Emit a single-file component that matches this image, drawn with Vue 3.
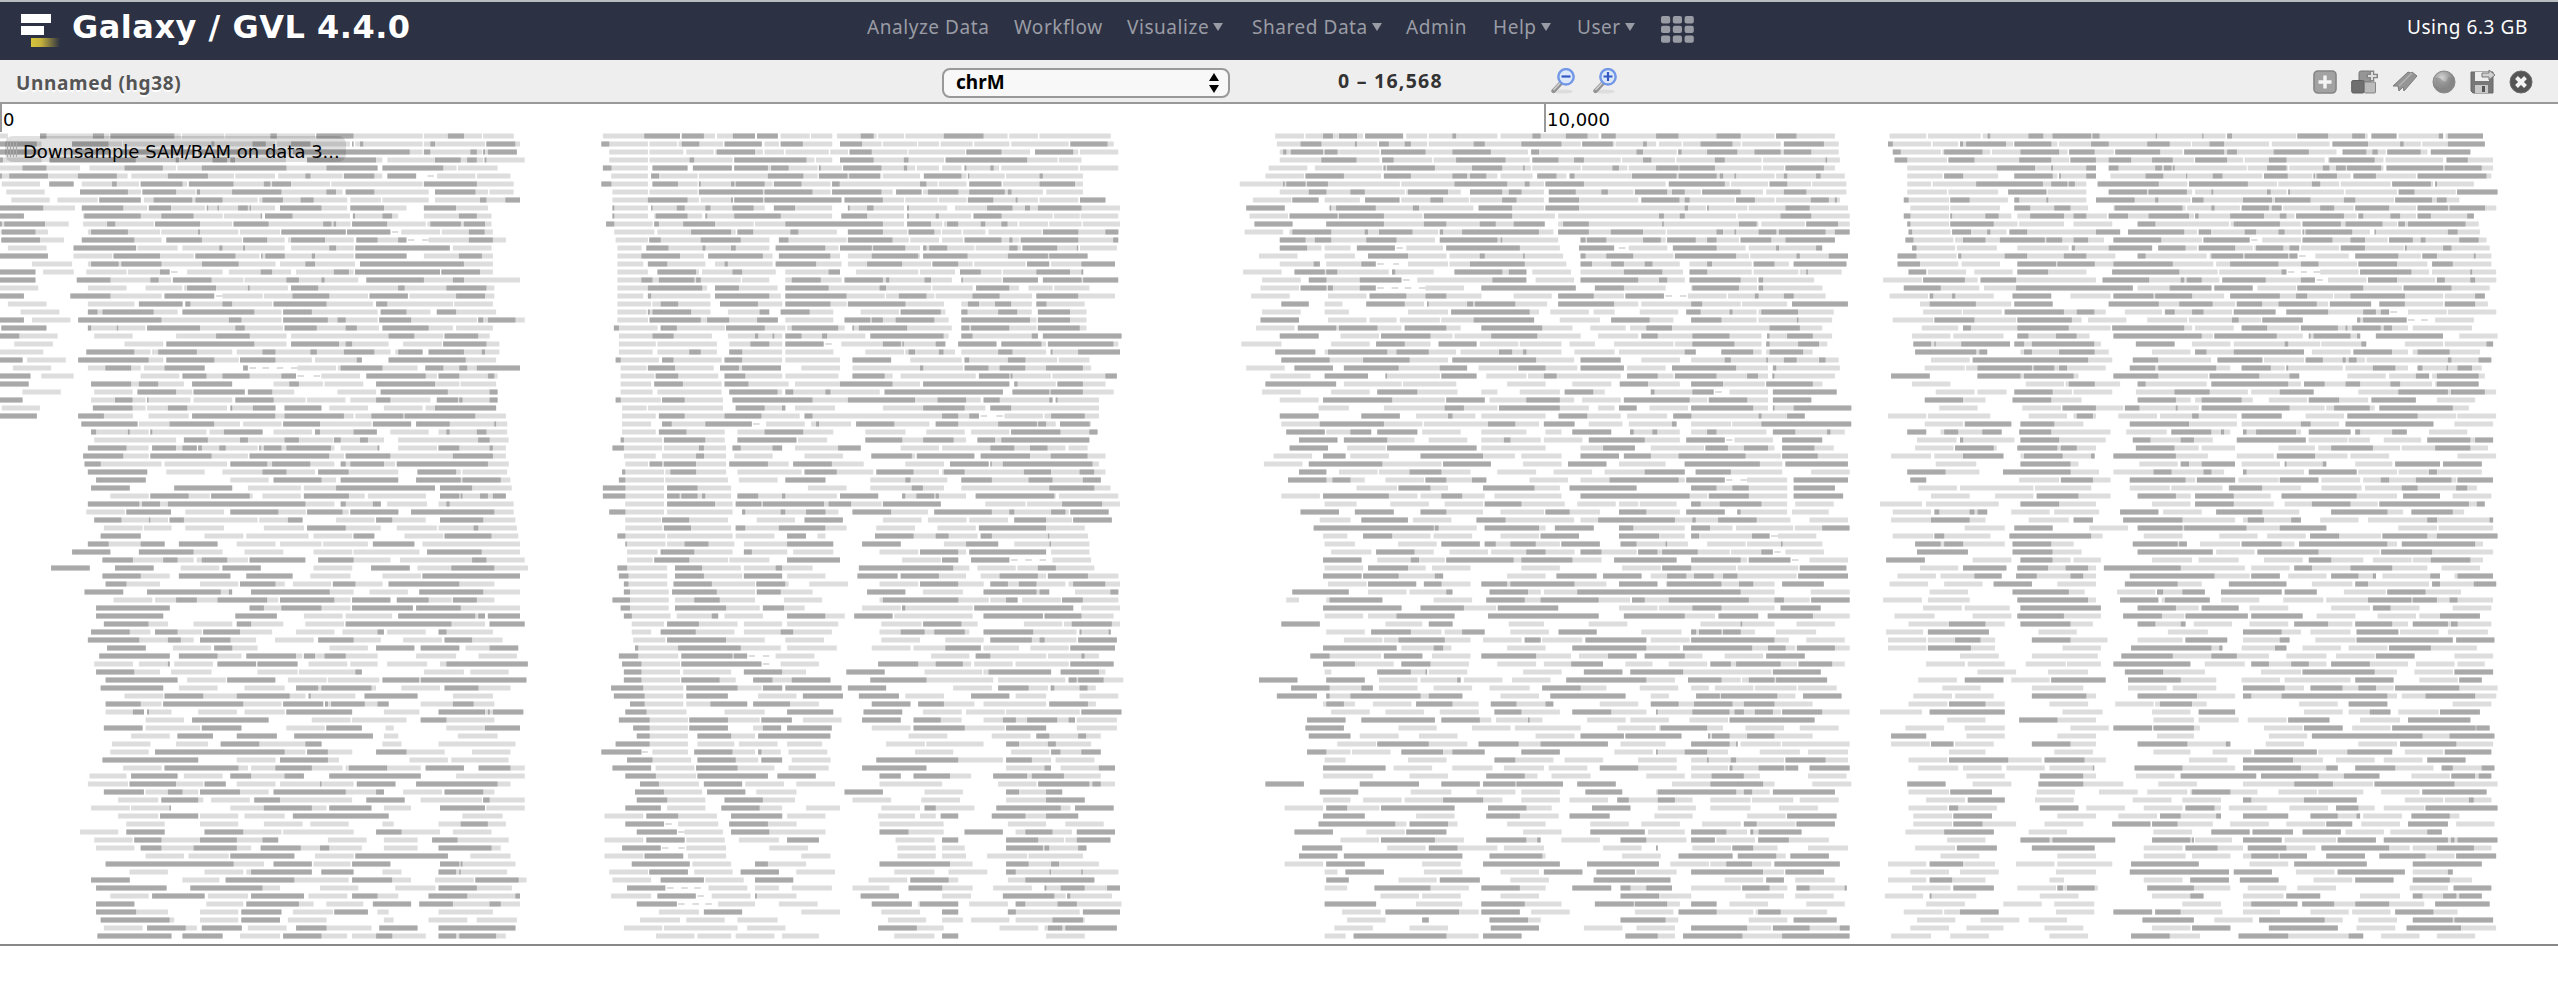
<script setup>
// Aligned reads, one line per pileup row. "a l b D c" means light from a to b, dark from b to c;
// "t" is a thin connector. Each block has its own origin and units per pixel.
const blocks = [
  { origin: 0, unit: 2.8, reads: `0l22 112D130l260D291l306 309D488l506 510l628 631l757D775l882 886D990l1183 1187l1254D1299l1349 1353l1438
0D103l116 202D304l341 345l592D600l707D744l770 775l815D869l980 986D990 995l1008D1017l1183 1187l1205D1218l1358 1362D1443l1456
0D112l200D310l336D545l550 555D800l820D1147l1183 1187D1205l1317D1335l1350 1353D1358l1366D1447
0D8l116 139D380l492D501l595D636l645D658l800 860D1053l1070 1085l1218D1290l1308D1335l1353 1357D1362l1469
0l63D130l224 251l349D456l492 497l565D802l912 914D1057 1071D1241l1278 1282l1393
0D5l26D134l218D327l357 368l470D582l655 659l770 779l855D869l959 963D1048l1070 1085D1165 1197t1215 1224l1331 1336l1429
5l112 138D206 229l314D327l389 394D511l524 529D654l739D757l762D815l924 928l1183 1187D1335l1438
18l125 224D358l394 399D493l547 551D560l650D788l914D941l959 968D1048l1200 1218D1331l1366 1371l1438
32l139 161l273 278D394 403l430D538l546 547D623l721 726l735D792l842D878l972 981l1066 1071l1200 1218l1344D1362l1415D1456
0D121l210 229D345l412 417D479l574 579D583l609D613l667D694l699D703l770 784D900l972 981D1075l1138 1187D1277l1366
0D67 233l236D394l452D542l623 627l730D734 742D819l980 988D994l1071D1098l1115 1187l1285D1335l1376
0D5l12D126l192 233l300D323l430 434D560l650 654D752l905D928l934D941l981 986D1084l1192 1197l1205D1290l1299D1358l1376
2l5D99l134 246l255D358l448 452l555D560l667 672l784 788D968 972D1093 1098t1115 1124l1232 1237l1313D1357l1380
4D112l179 229D376l452 466D565l677 681D748l797 806l815D910l990 998D1057l1115D1138 1142t1160 1182t1200 1200l1313D1380l1416
22l130 206D381 385l497 511l614D623l680 681D686l797 815l922D941l990 995D1259 1268l1376
0D134 206l314 318D448l542 547D659l726 731D735l743D797l873D882l990 995D1138 1187l1285D1349l1380
90l202 246l255D332l340D452l564 565D668l771 784l855D882l994 1008D1299l1380
0D99 121l206 242l354 358l448D475 479t497 524l623 641l730D762l815 829l935D977l990 994D1232 1236D1344l1380
0D99 215D309l421D444l479 484D592l681 685l802D837l900D909l1003 1026D1187l1268D1299l1456
0l107 246l354 408l510 515l524D605l694D699l806 815D891l1115D1133l1250D1362l1384
0D67 197D309l452 461D600 605t623 623l735 739l819D922l1030 1035D1142 1147l1277D1358l1384
22l130 246l376 389D511 519D533l623D650l762 766D914l1044 1053D1084l1268 1272l1380
58l166 246D273l287D430l497 511D712l788 793D873l1057 1066D1138l1205 1223D1277l1389
0D67 90l197 219D452l641D676l788 793D918l945D968l1057 1062D1151l1335 1339D1353l1366D1443l1469
4D130 246D255l327D331l407 412D560l659D685l792 797D887l968D999l1061 1071D1200l1268 1277l1380
0D54l161 264l371 493l605D699l802 815l1088D1160l1241 1245D1339l1371
40l148 349l457 466D712l802 815D949l968D986l1088 1129l1237 1241D1362l1398
0l121 242D376l421 426l443D551l650 663l735D771l869D887l963D1048l1093 1107l1115D1183 1200D1241l1241D1299l1349D1358l1398
0D63 76l184 219D416l457 466D600l668 672D771l873 882l999D1013 1088D1304l1389
36l143 246l295D367l394 403l461D573 681D694 699t717 735t753 775t793 815t833 833l941 946l954D1071l1169 1191D1241l1286D1308l1335D1456
0D85 116l206 394l502 511D578l623D699l788D829 833t851 878t896 900l1008 1026D1192l1223 1228D1286l1366D1384l1393
0D80 255D367l389D443l515 538D650 766l810D837l904 909l1017 1053D1218l1286 1290l1389
63l170 264l371 385D493l538 542D685 694D762l824 945l1053 1066D1254l1371D1393
0D63 255l322D371l407 412D416l533 542l650 659D766l855 860l967 981l1053D1093l1097 1098l1205 1223D1282l1286D1295l1371D1393
5l112 260D371l407 412l470D524l636 645D650l708D771 797D900 922l1030 1075l1183 1192l1218D1389
0D103 219D291l372 416l528 538D771l797D963l990 995l1040D1129l1133D1331l1416
228D385 389l475D600l672 681l788 793D896l1040 1044D1151 1165D1259l1384D1389l1420
255D269l358D363l416 421D426l578 587l627D735 766l873 882D896l990D1055 1093l1200 1228l1250D1259l1335D1362l1420
264l493 515D582l672D694l797D837l932 935D954l1008D1030l1075 1115l1339D1371l1424
246D354l416 426D493l511D551 555D565l614D632l721 726D730l739D788l802D927l936 954l1057D1062 1115l1223 1228D1286l1371D1380l1416
233D345l416 421D592l694 699D922l963 968D1093l1268D1380l1416
237D282l452 461l636 645D748l762D869l936 954D968l981D1075l1106 1111D1366l1424
246D412 466l573 623l735D802l882 891D976l1115 1169D1277l1290 1295l1420
269D408 645l752 766D900l941 954D1115 1165D1290l1295D1402l1429
255D363 488D650 694l842 851l941D1218 1232D1322l1433
309l416 421D528l587 591D699l707 735l842 851D977l1021 1030l1192 1232D1286l1290D1295l1344D1366l1380D1416
246D390l398D448l470D855l936 954D968l981l1044D1066 1084l1196 1228l1250D1259l1438
242l349 354D479 519l627 645D779l856 860D959l976 981D1115 1151D1384l1438
264D340l417D421l470 475D515l721 726l806D847 941l1048 1053D1098l1192 1232D1353l1443
291l399 403l480 519l627 739l851 860D968l1066 1111l1223 1228l1326D1339l1447
282D394 573l681 690l864 878l986 990D1048 1133l1241 1245D1376l1451
246D304l394D461 501D609 663l771 784l900 905l1030 1044D1160 1183l1456
202D309 389D542l623 685l793 878l986 990l1174 1196D1349l1456
287D372l457D497l542 551l565D636l694 699D855 891D990l1093 1120l1322D1362l1469
143D251 322D430 506l614 623D730 878l986 1039D1147 1169l1264D1384l1478
287D394l475 501D645 690D819 869l981 1071l1178 1183D1456
296D354l448 560l667 672D771l797 820l927 932D995l1071 1088D1286l1384
237D345 412D618l641D650 703D923l990 1035l1142 1174D1353l1456
318l426 434l493D551l609D748l779 784D936l981 986D1093 1111D1200l1264 1268D1335l1384
269D475 699D739l788D900l981 986D1156 1165D1290l1456
269D457 659D775 851l959 968l1098 1115D1331l1339D1358 1366D1456
291D416l470 542l650 663D703l793 855l963 968D1264l1358 1371D1469
255D363l421 434D497l565 569D672l762 829l936 959l1057D1075 1084l1192 1228D1250l1380
246D390l470D506l542 560D645l717 770l878 891D990l1066 1129l1237 1245D1322l1407
300D408 484l591 600D650l721 923l1030 1053D1160 1178D1286 1304l1371D1451
278D475 501D609l676 690D829l846 851D882l909D968l1057 1165l1277 1340l1447
264l372 389l470D475 488l596 609D717 721D833 864l972 981l1057 1084l1196 1232l1250D1478
269D376l448 479l592 721l833 837l995D1013 1187l1299 1317l1424
296D497 524l632 636D771 806l914 918l1062 1071D1174 1178D1474
282D457 501l609 685l797 829D891l900D1040l1053 1124l1232 1245D1340l1429
349l457 461D569l663D811l855 864D870l995 1021D1169 1268l1380
296D394l452 457D681l788 793D905 910D918l927D1021l1057D1088 1178l1268D1326l1384
296l372D403 412D417l480 555l663 685l797 802D986 1075l1174 1228D1358l1366D1371l1380D1465
408l515 538D752 873l981 986l1138 1178D1250l1384
291D399 408l560 565D676 802l909 914D1013 1080l1102 1250l1358D1456
367l475 497D596 663D775 824D1044 1075l1115 1282l1393
314l421 493l582 618D726l855D900 1071l1124 1228l1443
309l416 434D797l855 860D918l986 1053D1138l1245 1322l1429
287D555 663l771 784D918l949 1147l1254 1264l1424
345l452 461D668l694 703l771D873l959 968l977D1084l1178 1192D1299 1340D1429l1469
251l354 367D497 515l623 645D703l797D851 922D1178 1277l1469
246l358 363D493l569 573D632 663l771 784l896D900l990 999D1107 1165D1393l1429
291D403 408l470D511l555 560D672l752 766D968l1053D1075 1129l1237 1245D1353l1384
331l443 452D555l569 591l699 712D784l986 1026D1133 1178l1349 1353D1371l1469
255l363 367l475D479 645l739D873l914 922D1040 1075l1151 1232D1358 1362l1469
331l443 448D555 560l667 685l797 820D1088 1295l1407
354l461 560l667 739l847 869l976 1071l1102 1228l1290D1366l1416
224l331 354D461 573D681l788 793l990 1053D1124l1232 1268l1376
264l371 376D452l560D663l735D779 918l1026 1075l1169 1210D1281l1424
269l376 394D452l542D663l703 730D842l896D922l1013 1075l1169 1228D1376l1402
408l515 528l640 645D824 882l990 995D1254 1317l1429
296D654l739 766D873 878l981 986D1093 1232D1286l1290D1295l1443
363l470 573l681 690l703D873 900D990 1071l1124 1228D1277l1286D1290l1420
255D363 511l614 632D824l976 986D1098l1151 1218l1326 1331D1452l1474
269D466 533D735l784 896l1003 1107l1219 1228D1335l1433
309l416 426D573 582l694 703D851 864l972 986D1057l1115 1200D1308l1443D1456
269D376 578l681 690D837l878 914l1017 1044D1151 1174D1268l1371D1402l1456
269D381l470 560l667 676D788 820l932 936D1030 1057l1088 1228l1380
282D475l488 560l667 676D784 806l914 1075l1102 1200l1308 1335l1447
291l399 412D520l551 565D677 694l802 829D914l1040 1062D1169 1228D1443
273D480 511D623 672l784 793D900l972 986l1053D1098l1192 1228D1277l1286D1389l1416` },
  { origin: 590, unit: 2.8, reads: `36l152D252 257D319l350 356l400D462 468D526 534l615 619l678 692l758D794l802 807l879 883l991D1102l1169 1174l1254 1259l1458
32D54l162 167l244 248l257D306l372 377D481 489l529 534D596l678 700D762l816 820l915 919l977 982l1071 1076l1174 1180l1340 1345D1449l1466
54l162 167l261 270l346 351l355D462l484 489l543 548l668 673l722 727D789l888 892l1050 1054D1152l1232 1246D1353l1367 1372l1479
54l162 167l279D292l399 404D606l628 633l678 700D794l879D892l991 996D1224l1309 1313l1376
36D60l162 175D273 288D397 404D498l507D556l637 641D646l705 709D816l879D888l910 915l977 986l1040 1049D1054l1121D1130l1145 1152l1367 1372l1479
60l162 171D193l301 305l498D597l637 641D721l726D812l816 820l924 935D1040l1054 1058D1062l1161 1165l1259D1268l1380
32D60l162 175D246l301 305D310l395D404l408D489l511 515D592l673 678D699l924D942l973 977l1054 1062D1152 1156l1259D1358l1380
63l162 167l301 305D484l489D623l673 678D816l847 857D928 933l946D1031l1062D1161l1170D1180l1268 1278l1380
63l162 162D273l305 310l395D400 404D484l489D704 713D820l879 883l973 977l1054 1058D1129l1192D1197l1254 1259l1367 1372D1443
63D68l162 171D175l243D265l323D337l399D458l489 515D574l678 722D727l776D794l879 888D893l1000 1022l1112D1183l1218D1232l1254D1376l1484
63D68l162 180l184D273l314 323D328l404D534l678 704D776l879 888D893l968D977l1067 1074D1152l1295 1299l1371 1374l1479
45D68l175 180D193l261D350l458 462l547D820l879 888D955l986 991l1000D1031l1094D1107l1152D1169l1197 1202l1282 1286l1376 1380l1484
68l180 189l283D395l408 413D457l561D583l691 722D820l888 892D964l982 986l1040 1045l1107 1116l1264 1268D1367l1443D1479
72l162 166D198l310D422l502 529D556l718 722D847l892 897l977 986l1044 1049D1152l1174D1183l1202 1206D1367l1465D1479
77l144 158D220l314 315D323l395D408l502 520D659l695 700D789l793D883l924 933D942l950D1000l1076 1080l1174D1197l1206 1211D1308l1363D1367 1372l1475
77l144D252l319 331D484l511 529D673l700 722l789D919l924 933D1057l1170D1282l1286D1393
77l149 162D216l323 350l377D386l511 520D633l704 722l776D874l955 959D1031l1071 1076l1219 1224D1286 1291l1376D1470
77l162 189D297l305 314l399D426l520 547l668D700 745l919 924l1022 1036D1094l1152 1156l1250D1344l1376D1381
77l144D175l193D292l297D310l422 426l502 547l565D646l704 713D820l829D838l937D955l1013 1040D1044l1152 1156D1254 1268D1376l1381D1479
77l162 162D314l328 350D417l525 547D668l811D829l955 959l1071 1081D1174l1201 1228l1295 1300l1398
77l149 162D171l337 350D502l534 547D718l825 829l865D942l964 968l1071D1147l1238 1250D1367l1470
77l171 175l198D247l337 364D470l538 547D673l718 722D883l991 1040l1058D1089l1134D1179l1237 1250D1278l1385
77l158 162D167l175D283l337 386l475D502 534D615l681 758l865 870D982l995 1040D1057l1143D1196l1237 1254D1344l1390
77l162 167D310l328D390l468D526 547l681 713D785l789D820l856D964l1004 1040D1232l1250 1254D1344l1390
67D81l189 198D243l377 381D489l547 552l565D695l713 735D739l753D888l1013 1040D1062l1067D1174l1250 1254D1371l1390
81l175 175D234l341 386l462D471l511D516l538 547D592l650D664l771 785D990l1004 1040D1071l1237D1254 1268D1488
81l184 189l355 390l449D502l538 547D654 659t677 704l820D870l875D879l968D995 1031D1138 1152D1264l1277 1282D1465l1479
81l175 189l278D310l355 390D426l538 547l681 771l879 883l892D910l977D990l1022 1040l1143D1183l1277 1290D1295l1367D1484
72D86l193 202D234l368 377D426l538 547l700 735D843 897l1040 1049D1062l1170D1219l1308 1313l1398
86l158 162D238l346 364D417l426D535 592l700 735l924D933l1044 1049D1116l1147D1219l1277D1380l1403
86l180 184D247l359 377D435l538 547l695 735D825l847 870l1080 1089D1174l1178D1183l1290 1295l1443D1475
86l171 180D260l368 377D444l556 574l700D847l924 933D1174 1188D1197l1304 1309D1380l1443
86l175 189l368 390D525l538 547D569l659D673l811 825D1156 1183D1286l1290D1380l1466
72D86l198 202D265l372 399D623l722D910l973D1053l1094 1102D1147l1286D1295 1304D1309l1425
90l158 162l372 408D489l538D547 574l686 820l933D1049l1107 1121D1179l1425
90l184 193D265l377D480l587 601D623l986D1031l1062D1089 1094t1112 1138t1156 1161l1268 1273l1291D1385l1425
90l171 202D229l323D453 457t475 493l601 619l633D641l731 745D852l950 968D1031l1143D1251l1255D1277l1304 1316D1399l1403
90l184 193D270l377 413l489D597l681 771l883 942l1049 1067l1174 1179D1317l1398D1421
86D95l202 207D323l377 413D578 583l664 771D874l933D1018l1053 1085D1134l1152D1398
63D95l202 207l305D319l381 399D422l511D538 574l695D758 870l977 986l1121D1188l1232D1281l1331 1340l1393
95l184 202l297D319l381 404l511 601l708 788D901l910 915D1076 1094D1232l1290D1393l1443
99l162 167D202l207D297l381 390D498l556 569D677l766 883l991 1008D1116 1121D1125l1156D1407l1425
90D99l207 211l225D297l381 413l592 601D691l793 802D906l977 986l991D1049l1215D1291l1371D1412l1443
81D99l207 211l386 417l525 547D659 785l883D897l1000 1040D1125l1228D1295l1380D1430
36D99l207 216D301l395 610l718 785l901D932l991 1040l1286D1412l1457
36D99l207 216D251l256D301l314D323l395 413D471l538D547l691 700D807 874D883l914D964l968D977l1053 1080D1300l1304 1313l1479
99l207 216D350l399 408D480l484D655l668D731l816 820D982 1107l1219 1224l1322D1434l1484
54D99l207 216l399 426D435l534D547l605D659l695 735D843l946 964D1125l1174D1188l1291D1331l1340 1345D1452
99l198 202D278l386 467l574 601D708 820l928 946l1054 1062l1170 1188D1277l1349 1353D1461
99l202 207D283l395 408D435l529D659l718 802l910 973l1080 1089D1277l1385
77D99l211 216l399 408l516 552D605 637l659 798D906l968D1004l1085 1094D1125l1282D1286l1394
99D103l211 216l265D332l404 431l552D681 762D870 991l1053D1143 1188l1287D1291l1398
104l189 198D292l399 431D453l552 569l681 811l919 924D1031l1053 1062D1277 1291l1398
104l175 180D278l386 390l502 552D700 874l982 986D1031 1067D1174 1179t1197 1219t1237 1259t1277 1295l1403
77D104l216 238D314l422 431l520D538l623 753D1017l1062 1085l1192 1197l1254D1304l1412
81D108l216 238D319l426 431D538 552l659 749D861 870D977l1053 1094l1147D1254l1277 1282D1394l1479
95D108l216 234D341l462 466D547l556 614l722 811l919 924D1031l1102 1121D1170l1201D1250l1331 1340l1353D1443l1484
95D112l220 230D355l462 467D534l623 776D883 932l1044 1102D1250l1259D1286 1358l1457D1479
63D112l220 238l292D363l462 543l650 811l820D1031l1116 1121l1165D1197 1210l1318 1322D1380l1479
86D112l220 238D381l475 484D543l601 762l870 874D883l1071 1076D1353 1376l1484
95D117l225 243l341D359 377l484 552D659l713 740D847 852l1071 1102D1268 1273D1376l1466
117l207 216D305l413 431l538 552l695 816l928 933D1040l1085 1215l1322 1327l1349D1461l1484
117l171 198D296l404 431l534D569l677 811l870D937l964D1049l1062 1102D1241l1362 1371D1376l1452D1458
121l211 216D381l489 547l655 816l924 995l1102 1121D1237l1259D1273l1362 1367D1475
126D135l247D422l534 552l691 789l897 906l995D1094 1102l1201 1233l1340 1345D1470
81D135l247 256D399l403D440 444t462 484t502 520l628 955l1062 1080D1121l1277 1282l1376D1385l1425
90D144l252 256D480 484t502 534l641 807D919l968D1044l1067 1076l1183 1192l1340 1345D1466
95D144l252 261l395 431D538l605 718D825 937l1098 1102l1116D1291 1318D1425l1443
95D144l252 256D363l408 457D511l565D673 785D942l1129 1143l1331 1340D1362l1367D1438l1493
59D149l261 270D413l480 484D538 547D704 722D829 1017l1125 1143D1228l1282 1290D1300l1371D1393l1416
67D153l261 270D386 471l578 596D708 753D865 883l991 1067D1174 1192l1277 1371l1479
112D153l261 270l337D440 457D560l641 789D897 919D991l1076 1102l1277 1286D1394l1416
99D158l270 377l489 552D681 766D874 932l1040 1053l1161 1165l1371 1376D1488
81D167l274 278D386l475 480D565 596l704 762D870 906D982l1040 1102l1156D1192l1224D1308l1340D1358 1363l1475
121D167l274 278D386 457l484D535 552D677 789l897 906D1049l1161 1165D1277 1363l1475
131D167l274 301D395l462 471D673 892l1000 1125l1233 1250D1286l1367D1389l1430
72D167l274 301l404 417l525 552l650 829l937 942l1102 1165D1201l1282D1304l1403
32D144 144t162 175l274 292D399l462 471D480l534 556l664 910l1017 1179l1286 1291D1317l1376D1430
104D175l283 301D408l471 480D538 565l673 802D1031l1156 1165D1237l1291 1304l1412
63D171 184l292 297D413l516 556l668 762D942 1165l1273D1291 1318l1425D1470
99D184l297 301D498 525D632 811D870 906D1008l1067 1129D1224l1237D1327l1430
140D193l305 319D426 435l543 578l686 811l986 1143l1250 1255D1398l1407D1430l1470
126D207l314 328D435 466l578 713D820 937l1044 1165D1201l1277D1322
131D216l323 377D484l574 735l843 928l1036 1165l1277D1385
99D198 216l323 368D475l538 605l700 816l924 937D968l1076 1138D1318l1345 1358D1466
41l149 158D247l355 395D538 552l659 807l910 924l968 982D1031 1125D1219l1277D1367
99D207 211t229 247l359 390D498l578 811l990 1170l1277 1331l1438
131D243 247t265 265l372 395D502l659 811D892l990 1049D1156 1192l1219D1295l1349 1363D1470
41l149 158D265 270l377 417l529 552D641 856l964 986D1031 1165D1255l1327 1331l1363D1457
90D198 202t220 247t265 270l381 502l610 861l968 986l1049 1165D1268l1273D1286l1367D1390
41l149 153D261 274l381 592l673 861l968 986l1053 1112l1224 1228l1380
117D279 287l395 462D498l605 811D1008l1071 1165D1228l1291D1313l1425
54l162 166D274 292l399 422D529 578l686 852l964 1004l1112 1165D1192l1287D1291l1376D1380l1479
63l171 198D319 323l430 462D569 780l888 897D1004l1031 1170l1219D1412
104D211 216t234 256t274 292t310 332l440 462l529 565l677 735l838 892D986l1071 1129l1237 1273D1278l1318D1385l1448D1484
59l171 189D296 301t319 341l449 462D467l578 758D865 986l1067 1156D1300l1331 1336D1345l1461
131D243 247t265 287t305 323t341 359l462 529l637 789D901 919l924D1031 1062l1170 1192D1219l1309D1363l1488
193l305 319D426 592l700 816l924 986D1031 1170D1192l1371 1380D1484
140l252 270l377 413l525 834l941 986l1044 1067l1174 1192l1295D1380l1385
95l202 207l413 440l547 807D915l990 1147l1255 1273l1282D1322l1331D1475
185l292 301l395 408l516 538l641 852l964 986D1031 1277l1385` },
  { origin: 1230, unit: 2.45, reads: `111l181 185l228D252l267D311l326 331D424 432l483 487l545D554l655 663l741D761l823D876l903 910D945l1044D1099l1192D1251l1254 1255l1334 1338D1388l1482
115l173D224l306D311l361 365D389l428D443l483 487l597D624l714D812l859 863D938l942 945l1012D1021l1044 1051l1106 1110l1153D1231l1251 1255l1349 1357D1455l1491
122l130D138l149D228l232D263l267 268l366 370D479l545D639l730 738D757l996D1012l1094 1098D1106l1169D1243l1285D1349l1357D1424l1491
122l224D310l366 373D401l495 499l554D675l734 741D805l843D867l957 961l1012D1032l1090 1094l1188D1212l1302 1306l1459D1463l1494
95l189 208l373 376D381l385D502l593D667l718D722l737 741l859 863l937D953l973 977l1044D1099l1101D1188l1302 1306l1357 1361D1455l1482
87l181 185D279l370 377D443l545D581l588D628l655 663l741 753D800l824 832D844l984 985D1094l1099D1192l1200D1208l1236D1240l1334 1338l1357D1365l1436D1447l1506
24l130D134l138D185l189D240l416 420l550D679l722D734l769 773D867l1067 1075D1212l1224 1228l1318 1322D1365l1423 1427l1510
122l193D236l295D330l428 432l436D534l565 588D667l683D714l769 781D847l910D926l988 992D1071l1083D1114l1153 1157D1251l1306 1314l1357D1412l1510
56l150 153D217 232l318 331D415l416 420l491D522l585 588l667D702l769 781D855l1000 1008D1101l1114D1126l1236 1240D1286l1334 1338l1423D1467l1482D1487l1494
40D134 244D248l260D357l448D463l596 609D691l769 773D855l1114D1122l1165 1169D1173l1267 1271l1361D1420l1514
48l142 146D263l267D377l471 475D691l796 804l1051D1063l1102D1114l1240 1244l1349D1424l1518
60D153 236D377l475D530l612D651l695D771 804l816D879l1059 1059D1063l1247D1290l1295 1302l1408 1412D1490l1518
36l130 146l153D248l330D338l365D447l510 514D522l569D757l792 804D879l933D1012l1067 1071l1192D1208l1236D1240l1295D1338l1345D1459l1482D1518
122D185l208D248l334D408l502 514D655l663D667l804 859D871l875D922l1012D1055l1067 1071D1141l1169D1192l1247 1251D1326l1361D1482
122D189l224 232l295 311D404 408t424 432l522 530D710l808 855D941 953t969 977l1071 1085D1192l1263 1271l1338D1345l1436D1451
71l165 232l306 338D436l530 538l612D624l718D722l816 859D871l922D988l1086 1090D1240l1271 1275l1388D1396l1467D1514
122l205D220 236l322D357 361t377 400t414 436l534 538l588D722l726 726l824 859D887l934D965l1016D1035l1102 1126l1169D1181l1278 1283D1334l1369 1381D1510
32l126 158D232l236D263l389 397D405l499 550D667l683D726 741l835 859l965D1059l1110 1126D1169l1278 1283l1392 1396l1412D1416l1498
79l173 193D236l318D420 424t440 459l561 561l643D726 749l843 859D1000l1051D1071l1114 1126D1251l1291 1295D1306l1431
75l169 173D236l240D252l318D357 361t377 396t412 428t444 463t479 479l573 616D741l741D847 894D965l1067 1130l1133D1247l1291 1295D1306l1451
52l146 240l334 342D432l479D530l616 695l788 804D891l965 969D1063 1067t1083 1102t1118 1122l1216 1220l1286D1295l1357D1381l1459
126D193 232l275 334D428l475 483D487l581D596l600D699l777 804D941l1000 1008l1130D1157l1251 1255l1365 1377D1514
79l173 232l291 436l534 542D734l757 785l879 891l942 1004l1098 1118D1153l1224D1231l1290 1295l1302D1392l1479
75D169 240l334 342l408 416l514 518l597D745 808l906 934D1028l1086 1130D1204l1290 1295l1389D1393l1475
64l158 166D260l267D361l420 428D530l565 616D765l839 883l969 980l1020D1083l1322D1396l1451
122D217 271l365 370D491l545 550l640D753l859 902l1000 1008D1048l1133D1224l1302 1316D1322l1365D1428l1475
28l126 248l342 358D428l491 511D604 612l706 710l812 832l894 941l1086 1090l1133D1236l1302 1314D1322l1392D1443l1463
111D209 232l240D385l408D487l554 565l659D691l718D726l812 844l942 953l1114D1141 1204D1282l1302 1314l1322D1404l1427
126D244l326D440l534 545D750l843 859D957 1008l1102 1130l1212D1227l1314 1314D1318l1357D1388l1443D1459l1491
40l134 158D252 279D413l514D581 609l703 707D773l851 859D965 973l1067 1083D1240l1318 1330D1338l1494
99l197 232D338 381D385l514 518D604 628l726 730l769D800l957 973D1048l1086 1090D1192l1267D1294l1318 1329D1334l1482
87D260 279l420 424l554 679l773 839l934 955D1024l1102 1130D1208l1310 1314D1428l1451
79l173 248l342 361D459l463 463l557 616l655 710l808 820D890l918 1031D1040l1133D1185 1189t1205 1224l1318 1330D1486
122l217 228D397l526 530D624 636l726D808l843 863l957 965D1126l1169 1173D1267l1318 1330D1424
217l291 377l475 475l526D573l655 659D808l879 902l942 953D996 1028l1122 1130D1282l1318 1330D1334l1381D1522
122D217 322D416 456l534D545l601 616l773 805D875l957 973l1071 1086D1130l1295D1302l1365D1408
126l220D377l471 475l632D699l757 769D844 879l961 977l1083D1094 1130l1227 1231l1302D1522
138D232 236l295D346 361D459 471l565 616l726 773l812 839D934 980D989l1035D1047l1102 1130l1169D1192l1314 1330D1385l1463D1471l1506
169D263 279D385l452 487l581 616l671D687l761 769l863 879D1016l1102 1118D1212 1216t1231 1236l1330 1353D1451
146D240 287l381 385D604 616l773 859l914D992 1031l1161 1165D1220l1259D1318l1334 1353D1432l1479
107l201 228D283 295l389 467D620l698 714l812 859D953 965D1031l1099D1263l1349 1353D1440l1514
83l177 193D373l518 522D639 718l812 828D922 953l1067 1114D1298l1353 1361D1514
169D236 267l361 365l440D518l589 655l750 793l887 918l1016D1114 1141D1227l1353 1424l1518
142D236l251D295l330 381l475 479D530l593D628 734l828 859l930D1099l1114 1118D1212 1216t1231 1251t1267 1267l1365 1381D1514
310l409 413D491l534 620D746l808 832D996 1130D1192l1231D1271l1365 1381D1482
126l220 228D389l459 467l518D569l624 648l812 859D1126l1169 1173D1271l1365 1381D1502
232l310 393l487 526l620 624D714l820 851l945 953l1000 1004l1094 1130D1153l1200D1302l1365 1385l1479
173D267 306D401 467D530l620 663l769 773D832l906 953D1020l1102 1118D1212 1243D1251l1365 1377l1467
220l295 322D436 448l542 604D675l843 859l902D1090l1133D1141l1196D1290l1373 1420l1514
205D499l502D511l604 624D757l773 796D891 953D988l1114 1130D1176l1231 1240l1380 1384l1451D1518
228l287 326D397l491 499l593 663l757 761D855 953D1051l1114 1130D1149l1279D1322 1326t1342 1342l1436
232l306 412l506 518D612 624D651l687D749l808 812D906 957D996l1067D1071l1122 1169l1263 1267l1350D1354l1451
248l346 358D452l499 538l632 640l726D773l844 859D910l996 1000D1047l1059D1146l1224 1228l1302D1330 1334t1349 1361l1455
228D322 361l443D463l526 530D695l714D839l910 941D1094 1130D1251l1267 1271D1373 1377t1393 1420l1514
232l326 338D436l479 495l589 714l808 961l1055 1059D1130l1240 1244l1392 1396D1510
228D322 326D413l502D522 679l773 800D898 914D1008 1031l1071D1118l1137D1185l1208D1243l1388 1392D1514
240l334 338D456 475D518l589 616D679l687D844l922 953D1047 1068l1071D1204l1247D1282l1334 1353D1455
153D291 338l432 440l530D545 636D730l761 769l851D1251l1334 1423l1518
138l169 236l244D373 499l593 628D722l761D903l980 985D1016l1075D1271l1334D1357l1420 1424D1518
228D420 467D573l652 656D804 953l1047 1051l1133D1204l1334 1349D1447
232l326 338l408D550 632D903 965D1114l1188 1197D1294 1316l1318D1428l1518
126D220 381l471 487D545 683l769 879l973 1153l1251D1255l1334 1388l1482
236l330 346D443l518 526l569D624 687l781 805D898 1008l1106 1130D1142l1149D1204l1208D1251l1286 1338l1436
279l373 377l413D526l589 620l714 722D761 765l863 871D1020 1031l1126 1130D1334l1369 1412l1506
228D408 420l499D522l542 679l773 839D1020l1102 1110D1279l1318D1361l1385 1389D1482l1518
197D244l370 377D471 495l589 616D750l835 855l926D996 1016D1114l1157 1212l1306 1314D1408
228D306l401 420D491l585 655l750 769l836D914 969l1035 1075l1169 1177D1227l1240D1349l1389 1393D1475l1506
232l248 361D443l479D483 487l581 718l812 867D961 981D1110l1326 1330D1447
71D165 236D330 365l459 467l557D565 573l667 691l785 824D1020l1090 1122D1204l1251 1255l1271D1334l1338D1463
150D244l322D350 365l459 499l593 636l734 765D859l922 1004l1098 1130l1173 1188l1282 1286l1388 1392l1486
115D213 236D244l295D467l487D569 663l757 785D969 1031l1075 1142D1200l1203D1341l1385 1404D1498
228l236D279l306 350l444 456D545l609 639D702l773D792 906l1000 1031D1099l1137D1231l1259D1334l1427
248l342 381l475 514l609 648D714l808 839D934l1020 1044D1048l1133D1224l1236D1259l1286D1330l1349 1353D1451l1518
189D283 322D502 518D612l640 652l730D734l765 875l969 981l1075 1126l1220 1224D1432
185D279 413l506 593l687 698l859 949l1043 1051l1055D1169l1208 1263l1357 1396l1491
193D295 318l413 463l557 749l844 859D965 969D1106 1171D1176l1181D1224l1267D1334l1427
263l358 361D487l581 609D707l761D926 957l1067 1130D1224l1240D1244 1251l1349 1353l1518
189D236l295 299l393 420D522l545D624 714D808 942l1036 1044D1048l1114D1169l1220 1298l1396 1416l1514
232l283 436l530 648D699l792 820l914 1000l1094 1130l1169D1173l1227D1240l1357 1361D1459l1514
228D381 401l495 545l643 671l769 781l875 906D1000l1094 1130l1220 1224D1231l1295D1357l1361D1392 1420D1518
228l350 440l534 628D722l753 788l883 1020l1114 1130l1180D1259l1298 1416l1510
87D181 318D463 518D612 620D699l702D816 851D945 1083l1177 1177D1306l1334 1427l1522
220D314 443l542 604l699 714l808 871D961 1044l1048D1240l1259D1279l1322 1330D1482
228l295 326l420 428l522D620l667 714l808 832l926 949D977l1048D1090l1133 1177l1275 1279l1380 1396l1491
134l228 236D287l366 370D550 632D726l788 887D981 1048l1141 1177l1275 1345l1440
228D330 456l550 628D710l805 832D930 1040l1133 1267l1361 1365D1486
217D405l432 440D534l557 679l773 883l977 1008l1102 1157l1251 1259D1290l1385 1388D1482
158D252 334l428 432D530 718l812 883D1016 1024l1114 1130D1216l1267 1275D1282l1295D1400
271l365 370D502l573 628D726l753D761 812l906 957D1020l1118 1130D1188 1192l1286 1294D1369l1373 1373l1467
177D275 385l479 487D557l655 671l769 914l1008 1044D1048 1133l1227 1231D1282l1341 1416l1514
169D263 279D569 636D765l773 961l1055 1099D1231 1244D1338l1361 1373D1467
134l228 236D330 471l565 620D808 875D1051 1079l1173 1177l1216D1279l1326 1334D1494
232l263 283D377 475l569 663l757 769D863 898D992 996l1094 1130D1306l1357 1361D1455
236D291 413l506 514D612 687l781 891D1079 1212l1306 1314D1357 1385l1482
232l287 354D491l585 616D710l773 839D934 957D981l1020D1083 1130l1251 1255D1322l1365 1388D1420l1506D1511
369l463 471l565 663l757 957D1051l1130 1263l1357 1385l1479
232D358 456l569 616D722l812 894D989l992D1071l1102 1130D1192 1224l1318 1412l1506
275l369 381D561l609 616D710 738l832 992l1086 1099D1192l1282 1288l1294D1349l1463
287l381 471D487 636D730l761 957D1067l1098 1271l1365 1381D1486
256l350 440l534 639D757 867l961 996l1090 1130D1267l1326 1330D1420l1494D1518
232l283 303D530l609 620D714 969D1048l1090 1110D1255l1353D1518` },
  { origin: 1870, unit: 2.279, reads: `45l128 132l252 257l268D274l361D395l416D504l507D523l651D654l757D760l810 814D825l971 974D1044l1099D1128l1134 1143D1200 1205l1296D1306 1312l1317D1397
41D52l139 143l201 205D212l219D310l326 329D413l427 431l504D544l632D683l731 734l774D807l909 916l1047 1054D1135l1208D1216l1255 1259l1317D1401
52D70l161 165l169D256l274 278l343D431l450 454D512l555 559D661l712 716D807l814D836l920D1000l1063 1077D1131l1145D1157l1175 1179D1255l1270 1278D1368
56D85l175 179D238l340D413l454 457D515l544D595l643D690l738 741D814l850 854l909D949l1036 1044l1047D1150l1170 1175l1306 1314D1362l1420
85l289D376l413D417l493D515 544D566l650D665l670D687l690D694l858 861l905D949l953 956l1032D1047l1062D1084l1087D1165l1170 1177D1306l1310D1394l1420
85l165 169D212l292 329D416l427 431D435l493D515 548l628D668l719 720D723l781D803l894 898D952l1008 1011D1014l1018D1064l1095 1102D1153l1244 1248D1405l1416
85l139 143l242D394l413D450l453D467l493 519D658l723 727D861l927 931l1007D1026l1069 1073l1186 1190D1278l1283 1288D1292l1376
85l175 179l292 315D402 405l493 544D631l635D722l734 741l778D782l905D913l949 953D957l1080 1084l1201 1205D1241l1335 1338D1430
77D88l180 183D227l314 329D340l402D406l493 515D603l650D657l730 734D760l850D916l923D1004l1080D1106l1194 1197D1281l1292D1314l1343
92l180 183l296 329D365l420D457l497 555l558D712l719 723l778D785l843 847D909l916D938 942l1026D1058l1102 1106D1183l1244 1248D1317l1321D1402l1427
77D92l180 183D187l263D293l322 336l365D442l464D493l540 544D588l635D727l738 741D749l821D898l934D949l967 971D1080l1109 1113D1124l1186D1208l1244 1248D1278l1361D1376
85D92l180 183D282l336 340l442 464l552 610D650l818 822l829D934l981 986D1073l1084D1168l1201 1204D1219l1226D1357l1387
88D96l183 187D230l267D274l311 318D358l515D570 588D716l745 749D777l854D880l931D945l982 986D989l993D1099l1139 1150D1153l1317D1339l1390
81D99l190 194l212D263l296D398l402D438l464D497l533 555D664l756 760D865 869t883 894l982 986D1054l1095D1128l1179 1183D1237l1255D1266l1343D1387l1405
96D106l194 198l289 336l453 460D467l544D643 657D719l745 749D832l872 876l880D942l956D978 982l1069 1073D1128l1216 1219D1223l1306D1325l1412
63D106l197 201D208l307D358l442D493l559 610D628l767 774l778D850l854D953l956D974 978t993 1015l1091 1106D1204l1255 1259D1292l1376D1380l1416
63D114l201 209l296 336D424l427D512l555D690l782 789l821D931l982D1022l1110 1113D1201l1270 1281D1328l1416
88D128 132l219 238l325 336D406l493 552D705l792 796l938D949 953t967 982t996 1011t1026 1026l1113 1117D1234l1274 1281l1368D1372l1427
30l118 121D216l245 252D333l336l515 530D636l708D716l722D756l796 803D902l982D1014 1018t1032 1044l1131 1135D1201l1288 1292D1310l1368D1379l1427
77D161l249 260l333D599 610l683D778 785D872 883l971 974D1124l1212 1216D1325l1412
45l132 136D144l187D194l282 325D413 457l548 555D646l650D734l807 821D934l971D996l1055 1058l1095D1219l1306 1310l1379D1401
114l136D241l322 329D416 544D658l705D781l832 836D894l931D1018l1044 1048D1142 1161D1219l1306 1310D1379l1408
121l209 212l300 307D442l471D511l537 581l665 672D694l734D760l825 829D924 949D1044l1124D1153l1164D1183 1186t1201 1226l1314 1317l1427
52l144 147D238l242 242l333 336D460l482 497l584 632l723 727l825D840l891 894D986 1110D1117l1124D1223 1226t1241 1256t1271 1288l1376
118l201 212D230l336D453l548 552D716l734 741l829 847D905l978 982D1066l1084D1088l1099D1164l1171D1190l1226 1237l1372
96l183 190l304 336D361l424D471l500 555D756l781 785D927l986 1000D1004l1011D1095l1110D1117 1153D1306 1343l1430
99D139l147D150l208D319 329D351l369D511l526 606D694 734l821 829l945D953l1026 1029l1120D1131 1219l1306 1310l1405D1420
103D242l249D267 343l351D369l431D512l544 643l730 741D767l829D989 1007l1095 1102D1190l1226 1237l1248D1321l1390
139l227 234D497l552 599D657l777 792D894 898l989 993D1032l1077D1084l1091D1109l1128 1132l1317D1325l1387D1416
125l216 219l245D369l373D420l431D449l537 592D650l657D789l821 847D913l945 949D953l1077 1084l1146D1197l1226 1248D1259l1314D1317l1339D1372l1394
48D136 245D343l351D464l475 555D657l770 774D887l956D978 1088l1175 1183l1244D1274 1281l1292D1387l1401
96l183 355l442 446l453D512l570 610D628l767 778D953l982 989D1036l1084D1117l1186D1208l1281 1288l1292D1387
150l238 245l311 329D416l460 464l552 606l694D774l861 869l934D1011 1113l1204D1317l1324D1401l1427
125D212l263 325D413l482 610D697l731 741l756D847l872 909l996 1000D1069l1135 1143D1244 1292l1379
158l245 347l435 439D515l577 581D614l697D701l749 756D956l1036 1040l1058D1139l1150 1161D1328l1365
41l128 132l274 362l449 464l471D508l515 566l654 661l734D749l836 847D938 993l1080 1088D1248l1336 1339l1427
125l212 216D322 343D420l486 592D727l836 847l982D1004l1069 1084D1284 1332l1420
85D128 161l169D201l256D300 340D413l548 584l676 687D778l800D807l821 850D858l880D971l982 1000D1095 1106D1117l1190D1223 1274l1361
107l197 205D212l329 343D431l537 599D639l708D738l781 836D993 1000l1088 1091l1139 1171l1256 1270D1368l1379D1420
103l190 194D282l289 336D427l435D471l515 606D694l749 756l832 931l1014 1022l1051D1146l1208 1212l1288D1368l1408
48l139 147l212D304 343l351D439l504D512 555D697l770 836l920 927D1014l1088 1095l1183 1339l1427
150l242 343D457l475 614l701 708D727l756D832 847l934 945D949l1032D1040 1106l1190 1197D1299 1306D1394
85D172l249 303D457l522 555l646D687l760D778l807 850D858l989 1000D1109 1113l1201 1205l1274D1292l1394
92D128 340l431 435D508l548 592D719l741 745D832 840l931 934D1022 1029l1117 1124l1164D1183l1244D1325l1336 1339D1420
110l198 205l372 376l504 592l683 687l803 818D894l982 1029l1120 1128l1212D1248l1336D1361l1383
139l227 285l372 380D475l548 610D697l731 741D829l913 938D1109l1201 1215D1299 1328l1416
23l118 128l293 343D431l515 643l730 741D829l832 832l920 945l1007D1095l1157 1161D1365l1383D1401
52l139 147D158l227D238l245D267 322l409 420l522 570D657 668l756 789D894l978 1051D1179l1215 1234D1328l1354
48l139D227l263 362l453 464D508 577D712l752l832 850l861D898l960D982 1026l1113 1135l1270D1292l1412D1420
216l307 329D416 500l588 610D712l716D858l934D1040 1204l1292 1296l1420
52l144 147D169l274 318D504l530 624l712 796l883 905l993 1003D1069l1164 1168D1270l1292D1430
103D161l169D212l307 325D413l464 599D701l705D722 752l843 847D938l967 978D1179l1201 1212D1379l1397
107D223 325D416l482 610D781 789l876 883D1022l1161 1165D1281l1420
37D125 234l322 343D416l457 464l526 643l734 749l840 898l986 1000D1051l1124 1146l1234 1237l1278D1368l1397
114l201 212D311 336D406l446D497l515 533D708l854 869l956 967D1007l1095D1190l1270 1303l1390
63l150 161l238D300 333D380l457D486l515 592D785l865 869D934 953l1040 1051D1113l1146D1153 1168l1277D1299 1332l1339D1420
45l132 169l256 282D369 427l515 581D701l756 818D949 1007l1099 1106D1135l1274 1281D1299l1376D1427
136l223 325D453l489 563l650 654D668l712D763 800D938 945D1018 1080l1175 1179D1266l1347
30l118 132l227 336D497l515 570D657 665l672D774 800l887 942l1033 1040l1135D1234l1237D1292l1321D1339l1420
121l209 216l318 343D526 610D697l749 756D840 865l953 1051l1139 1146D1186l1252 1328l1416
56l147 234l322 336D442l526 577D665l716 719D861 869D986 1018l1106 1157l1244 1252l1299D1390
88l180D263l307 343D457l508 610D650l708D719 738l825 865l953 967D1044l1099 1106D1190l1226 1237D1317l1324D1339l1416
37l121 132D271 384l471 679l770 850D938l982 1004l1095 1109D1204 1208l1296 1317l1408
41l128 132l194D252l285 369D457l541 610l712 719D814 850l934D956 1015l1106 1109D1328 1336D1423
41l128 132D230l285 439l526 595D778l796D803 847l923D949 986l1073 1091l1179 1183D1278l1383
205l293 369l519 573D690l778D836l909 949l1040 1062l1150 1153D1241 1332l1420
128l216 223l307 355l446 449l526 555D730 763l854 869D909l960D1000l1040 1051D1139l1226 1244l1332 1339l1401
245l333 406l497 581D668l763 891l982 986D1150l1201 1241l1328 1332D1420
110l198 216D304 322l409 413D537 588D708l789 847l934 945l1095 1106D1193 1252l1339 1343D1394
165l252 369l486 588l676 690l789 850D945l989 1004D1077l1113D1153l1193 1197D1343l1430
99l187 194l282 369D493l515 610D745l832 850D869l938D1179l1201 1212l1266D1379l1427
88l176 180D263l307 409l497 559l646 650l661D734l767 978l1066 1091D1179 1328l1416
23l118 136D307 439l530 643l730 749D832 989l1077 1091l1139D1186 1204l1296 1299D1390
176l263 340D427l515 646l738 749l840 861l949 953D1047 1117l1208 1226D1368
81l169 216l307 457l544 555D643 646D738l752 898l986 989D1077 1099l1186 1190D1380l1382D1412
48D128 220l307 427l515 654l738 909l996 1007D1259l1321D1423
48l136 139D190 194l282 369D457l515 610D723l811D821 902l989 1113l1201 1208D1336l1420
180l263 420l508 646l730 781l869 876D1018 1022l1088D1190 1219l1306 1310D1416
88l176 180D315l391 398D489l537 727l814 850D964l1032 1062l1150 1171l1259 1270D1357
110l201 212l300 311l398 409l508D511 603D712l832 850D982l1040D1066 1106D1197l1284 1303D1328l1394D1423
220l307 387D486l515 606l694 708D880 891D1022l1080D1161 1234l1321 1325D1379l1387D1416
85D172 234l322 384D486l577 657l745 850l967D1055l1146 1150D1332l1430
88l180 183D278 380l467 522l610 632l723 730l734D821l883 931l1018 1022l1124 1165l1252 1259D1405
128l216 223D307 376l464 599l687 712l800 850D869l989D1109 1219l1306 1310l1365D1376l1416
88l176 180D201l289 387D475 493l581 624l712 719D785l800 818l905 956l1044 1062D1113l1150 1171l1263 1266D1430
99l187 190D278 427l515 566l654 661D708l789D800 850D953 1004D1066l1109D1117 1124l1212 1234D1321l1343
99l187 190D256l333 398l486 552D639 643D701l781 821l909 949l1037 1040D1099 1120l1208 1226D1317 1336l1423
81l169D282 362l449 646l734 778D865 872D964 986D1073 1084l1171 1186l1270D1303
176l263 343D409l416D559 643D730l734D738 741l825 850D938 945l1062 1066D1153 1171D1317l1324D1332l1339D1430
103l194 198D289 369D512 624l712 719D792l850 861D949l1015 1029D1183l1230 1237l1292D1376l1416
161l249 427l515 624l719 734l821 850l869D931l934D996 1040D1128 1161D1266l1332 1336D1427
41l128 136D212l285 333l420 427l552 595D749 865l953 967D1132 1237D1394
92l180 205l293 424l515 592D818 829D916 971l1058 1066D1219 1237l1317D1328
41l128 136D187l263 409l442 624l712 730D818 843D931 1011l1099 1106D1193 1237D1321l1372
96l183 190D282 336l424 427D439l449D512l519 632D738l821 861l949 974l1062 1230l1317 1330D1416
34l121 136D140l242 387l475 643l730D760 850l942 949D1026 1117l1208 1237D1259l1306D1336l1343D1394
128l216 304l391 420l511 712l800 850l869D974 985D1058l1106D1183l1263 1288D1412
77l165 169l205D293 424l511 555D643 650D708l803 850l934 1004l1091 1099l1186 1197D1284l1339
107l194 252l340 362l449 621D738 785l872 887D1036l1077 1113l1201 1237D1328l1332D1420
92l180 220l304 398l486 643l730 734D821 909D1066 1109l1197 1223D1347l1427
48l139 183l271 409l497 595D683l752 840D953l1091D1124 1165l1252 1292l1379` },
]
const paths = { l: ['', ''], D: ['', ''], t: ['', ''] }
const bar = (x, y, w, h) => `M${x.toFixed(1)} ${y}h${w.toFixed(1)}v${h}h-${w.toFixed(1)}z`
blocks.forEach(({ origin, unit, reads }) => reads.split('\n').forEach((line, i) => line.split(' ').forEach((run) => {
  const p = run.split(/([lDt])/)
  for (let k = 0; k + 2 < p.length; k += 2) {
    const x = origin + p[k] / unit
    const w = (p[k + 2] - p[k]) / unit
    if (w <= 0) continue
    if (p[k + 1] === 't') paths.t[1] += bar(x, 3 + i * 8, w, 2)
    else {
      paths[p[k + 1]][0] += bar(x, 1 + i * 8, w, 6)
      paths[p[k + 1]][1] += bar(x, 2 + i * 8, w, 4)
    }
  }
})))
</script>

<template>
  <div class="page">
    <header class="masthead">
      <svg class="logo" width="44" height="36" viewBox="0 0 44 36">
        <defs><linearGradient id="fade"><stop offset="0" stop-color="#d6c43c" /><stop offset=".35" stop-color="#c4b13c" /><stop offset="1" stop-color="#2c3143" /></linearGradient></defs>
        <path d="M1 2h30v9H1zM1 14h23v9H1z" fill="#fff" /><path d="M11 26h29v9H11z" fill="url(#fade)" />
      </svg>
      <span class="brand">Galaxy / GVL 4.4.0</span>
      <nav class="nav">
        <span>Analyze Data</span><span>Workflow</span><span>Visualize<i /></span><span>Shared Data<i /></span><span>Admin</span><span>Help<i /></span><span>User<i /></span>
        <svg class="apps" width="33" height="28"><g fill="#9a9ca5"><template v-for="r in 3"><rect v-for="c in 3" :key="r + '-' + c" :x="(c - 1) * 11.8" :y="(r - 1) * 9.7" width="9.2" height="7.4" rx="2" /></template></g></svg>
      </nav>
      <span class="quota">Using 6.3 GB</span>
    </header>
    <div class="toolbar">
      <span class="name">Unnamed (hg38)</span>
      <div class="chrom"><span>chrM</span><svg width="12" height="20"><path d="M6 0l5 8H1zM6 20l5-8H1z" /></svg></div>
      <span class="range">0 – 16,568</span>
      <div class="zooms">
        <svg v-for="z in ['M10.5 8.5h9', 'M10.5 8.5h9M15 4v9']" :key="z" width="26" height="27" viewBox="0 0 26 27">
          <ellipse cx="12" cy="23.5" rx="10" ry="2" fill="#ddd" />
          <path d="M10 15L2.5 23" stroke="#929292" stroke-width="4.4" stroke-linecap="round" /><path d="M9.5 14.5L2.5 22" stroke="#d0d0d0" stroke-width="1.6" />
          <circle cx="15" cy="8.8" r="7.7" fill="#dde8fb" stroke="#7297e6" stroke-width="2.4" /><path :d="z" stroke="#3158c4" stroke-width="2.2" />
        </svg>
      </div>
      <div class="tools">
        <svg width="24" height="24" viewBox="0 0 24 24"><rect x="1" y="1" width="22" height="22" rx="4" fill="#a2a2a2" stroke="#858585" stroke-width="1.6" /><path d="M12 5.500v13M5.500 12h13" stroke="#f4f4f4" stroke-width="3.400" /></svg>
        <svg width="27" height="24" viewBox="0 0 27 24"><rect x="8" y="1" width="12" height="11" rx="2" fill="#969696" stroke="#777" /><rect x=".7" y="10.500" width="12.500" height="12.500" rx="1.500" fill="#6f6f6f" stroke="#5f5f5f" /><rect x="13.500" y="12" width="11" height="11" rx="1" fill="#bbb" stroke="#858585" /><path d="M21 .5v11M15.500 6H27" stroke="#858585" stroke-width="4.500" /><path d="M21 2v8M17 6h8.500" stroke="#ddd" stroke-width="2" /></svg>
        <svg width="26" height="24" viewBox="0 0 26 24"><path d="M1 16L16 2l3 1 1-1 5 4-13 15-1-4-4 4-1-5z" fill="#959595" stroke="#7c7c7c" stroke-linejoin="round" /><path d="M7 16L20 3" stroke="#b4b4b4" stroke-width="1.500" /></svg>
        <svg width="24" height="24" viewBox="0 0 24 24"><defs><radialGradient id="ball" cx=".4" cy=".3"><stop offset="0" stop-color="#d4d4d4" /><stop offset="1" stop-color="#868686" /></radialGradient></defs><circle cx="12" cy="12" r="11" fill="url(#ball)" stroke="#8a8a8a" /><path d="M3 8q5-1 7 2t5 1l1-4 5 1q2 5-1 8l-5-1-4 4q-4-4-7-5z" fill="#858585" opacity=".55" /></svg>
        <svg width="25" height="24" viewBox="0 0 25 24"><path d="M1 2h22v21H3l-2-2z" fill="#777" stroke="#686868" /><path d="M5 2h14v9H5z" fill="#eee" /><path d="M5 15h13v8H5z" fill="#c8c8c8" /><path d="M12 16h3v6h-3z" fill="#555" /><path d="M12 3h7V0l6 5-6 5V7h-7z" fill="#d0d0d0" stroke="#777" /></svg>
        <svg width="24" height="24" viewBox="0 0 24 24"><circle cx="12" cy="12" r="11" fill="#555" stroke="#6c6c6c" /><path d="M7.500 7.500l9 9M16.500 7.500l-9 9" stroke="#f2f2f2" stroke-width="4" /></svg>
      </div>
    </div>
    <div class="ruler"><span class="t0">0</span><span class="t1">10,000</span></div>
    <div class="track">
      <svg class="reads" width="2558" height="812">
        <path :d="paths.l[0]" fill="#eee" /><path :d="paths.l[1]" fill="#ddd" />
        <path :d="paths.D[0]" fill="#cbcbcb" /><path :d="paths.D[1]" fill="#a9a9a9" />
        <path :d="paths.t[1]" fill="#ddd" />
      </svg>
      <div class="label"><span class="grip" />Downsample SAM/BAM on data 3...</div>
    </div>
  </div>
</template>

<style>
body { margin: 0; background: #fff; }
</style>
<style scoped>
.page { width: 2558px; height: 1000px; overflow: hidden; font-family: "Noto Sans", sans-serif; }
.masthead { height: 58px; border-top: 2px solid #b9bcc1; background: #2c3143; display: flex; }
.logo { margin: 10px 0 0 20px; }
.brand { margin-left: 8px; width: 795px; font: bold 32px/28px "DejaVu Sans", sans-serif; letter-spacing: .5px; color: #fff; padding-top: 11px; }
.nav { display: grid; grid-template-columns: 147px 113px 125px 154px 87px 84px 84px 33px; font-size: 19px; line-height: 26px; letter-spacing: .55px; color: #9a9ca5; padding-top: 12px; white-space: nowrap; }
.nav i { display: inline-block; border: 5.5px solid transparent; border-top: 8px solid #9a9ca5; border-bottom: 0; margin-left: 4px; vertical-align: 3px; }
.apps { margin-top: 2px; }
.quota { margin-left: 713px; font-size: 19px; line-height: 26px; letter-spacing: .55px; padding-top: 12px; color: #fff; white-space: nowrap; }
.toolbar { height: 42px; background: #eee; border-bottom: 2px solid #999; display: flex; align-items: flex-start; }
.name { margin-left: 16px; width: 926px; font: bold 19px/26px "Noto Sans", sans-serif; letter-spacing: .65px; padding-top: 10px; color: #555; text-shadow: 0 2px 0 #fff; }
.chrom { margin-top: 8px; box-sizing: border-box; width: 288px; height: 30px; border: 2px solid #999; border-radius: 8px; background: #f8f8f8; display: flex; justify-content: space-between; align-items: center; padding: 0 8px 0 12px; font-weight: bold; font-size: 19px; }
.chrom span { padding-bottom: 3px; }
.range { margin-left: 108px; width: 213px; font: bold 19.5px/26px "Noto Sans", sans-serif; letter-spacing: 1.25px; padding-top: 8px; color: #333; }
.zooms { display: flex; gap: 16px; width: 762px; padding-top: 8px; }
.tools { display: flex; align-items: center; gap: 14px; padding-top: 10px; }
.ruler { height: 28px; display: flex; font: 18px/31px "DejaVu Sans", sans-serif; }
.ruler span { border-left: 2px solid #999; padding-left: 1px; }
.t0 { width: 1541px; }
.track { height: 812px; position: relative; border-bottom: 2px solid #888; }
.reads { display: block; }
.label { position: absolute; left: 5px; top: 4px; width: 341px; height: 26px; border-radius: 8px; background: rgba(0,0,0,.12); box-sizing: border-box; padding-left: 2px; font: 18px/31px "DejaVu Sans", sans-serif; display: flex; white-space: nowrap; }
.grip { width: 12px; height: 16px; margin: 5px 4px 0 0; flex: none; background: repeating-linear-gradient(90deg, #aaa 0 1px, transparent 1px 3px); }
</style>
